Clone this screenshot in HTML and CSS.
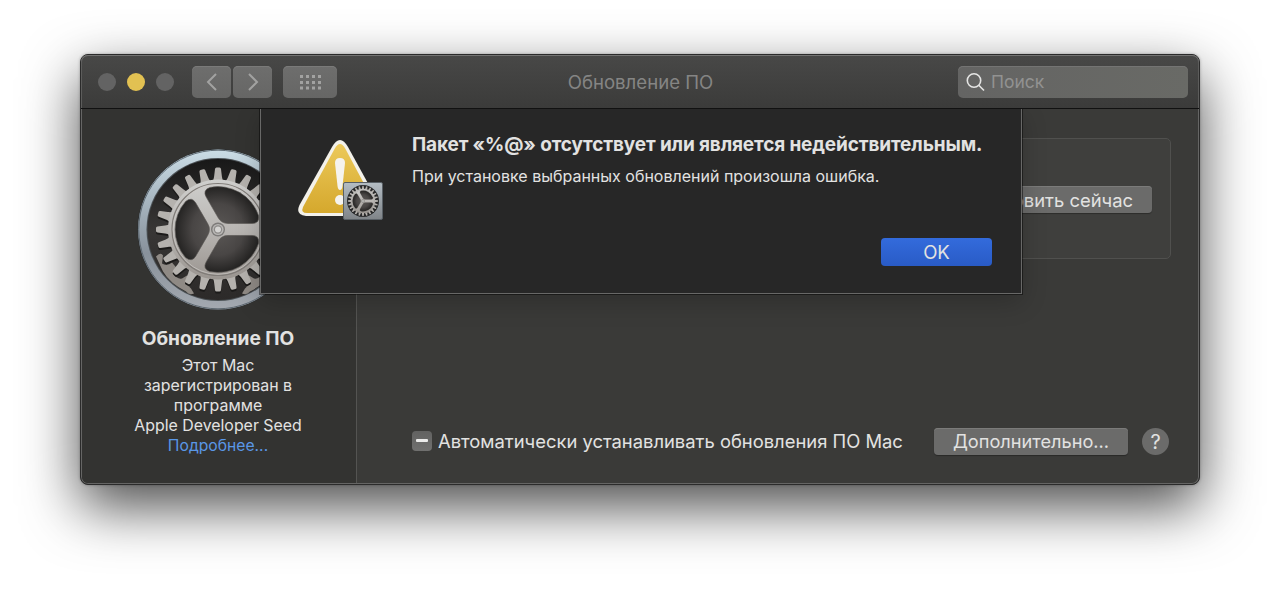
FILE: index.html
```html
<!DOCTYPE html>
<html lang="ru">
<head>
    <meta charset="UTF-8">
    <meta name="viewport" content="width=device-width, initial-scale=1.0">
    <title>Обновление ПО</title>
    <link rel="stylesheet" href="styles.css">
</head>
<body>
    <svg width="0" height="0" class="defs">
        <defs>
            <linearGradient id="metal" x1="0" y1="0" x2="0" y2="1">
                <stop offset="0" stop-color="#cfcfcd"/>
                <stop offset="0.5" stop-color="#b9b6b3"/>
                <stop offset="1" stop-color="#9a9590"/>
            </linearGradient>
            <linearGradient id="rim" x1="0" y1="0" x2="0" y2="1">
                <stop offset="0" stop-color="#cbdde6"/>
                <stop offset="0.3" stop-color="#a9b8c2"/>
                <stop offset="0.65" stop-color="#88919b"/>
                <stop offset="1" stop-color="#a4a9b0"/>
            </linearGradient>
            <linearGradient id="inside" x1="0" y1="0" x2="0" y2="1">
                <stop offset="0" stop-color="#181818"/>
                <stop offset="0.5" stop-color="#383635"/>
                <stop offset="1" stop-color="#2c2a29"/>
            </linearGradient>
            <radialGradient id="depth" gradientUnits="userSpaceOnUse" cx="0" cy="0" r="43">
                <stop offset="0" stop-color="#5b5856"/>
                <stop offset="0.6" stop-color="#494645"/>
                <stop offset="1" stop-color="#242322"/>
            </radialGradient>
            <linearGradient id="yellow" x1="0" y1="0" x2="0" y2="1">
                <stop offset="0" stop-color="#ecc95a"/>
                <stop offset="1" stop-color="#d5a82d"/>
            </linearGradient>
            <linearGradient id="plate" x1="0" y1="0" x2="0" y2="1">
                <stop offset="0" stop-color="#b4bdc4"/>
                <stop offset="1" stop-color="#7f8488"/>
            </linearGradient>
            <path id="tooth" d="M-5.500 -48 C-4.500 -50 -4.200 -51 -3.900 -53 L-3 -60.500 Q-2.800 -62 -1.500 -62 H1.500 Q2.800 -62 3 -60.500 L3.900 -53 C4.200 -51 4.500 -50 5.500 -48 Z"/>
            <g id="teeth">
                <use href="#tooth"/>
                <use href="#tooth" transform="rotate(15)"/>
                <use href="#tooth" transform="rotate(30)"/>
                <use href="#tooth" transform="rotate(45)"/>
                <use href="#tooth" transform="rotate(60)"/>
                <use href="#tooth" transform="rotate(75)"/>
            </g>
            <g id="all-teeth">
                <use href="#teeth"/>
                <use href="#teeth" transform="rotate(90)"/>
                <use href="#teeth" transform="rotate(180)"/>
                <use href="#teeth" transform="rotate(270)"/>
            </g>
            <!-- hole between two spokes -->
            <path id="hole" d="M10 -6 H34 Q41.800 -6 40.500 -14 A42.800 42.800 0 0 0 -8.100 -42.100 Q-15.700 -39.200 -11.800 -32.400 L0.200 -11.660 Q3.500 -6 10 -6 Z"/>
            <g id="gear">
                <g fill="#1b1a19">
                    <use href="#all-teeth" transform="translate(0 2)"/>
                </g>
                <g fill="#b5b2ae">
                    <use href="#all-teeth"/>
                </g>
                <circle r="50" fill="url(#metal)"/>
                <circle r="46" fill="none" stroke="#807c78" stroke-width="1.200"/>
                <circle r="44.800" fill="none" stroke="#cbc9c6" stroke-width="0.700"/>
                <g fill="url(#depth)" stroke="#5a5754" stroke-width="0.600">
                    <use href="#hole"/>
                    <use href="#hole" transform="rotate(120)"/>
                    <use href="#hole" transform="rotate(240)"/>
                </g>
                <circle r="7" fill="#7d7b79"/>
                <circle r="5.600" fill="#b9b7b5"/>
                <circle r="4.200" fill="#8d8b89"/>
                <circle r="3" fill="#d5d4d2"/>
            </g>
        </defs>
    </svg>

    <div class="window">
        <header class="toolbar">
            <span class="light"></span>
            <span class="light light-yellow"></span>
            <span class="light"></span>
            <div class="nav">
                <button class="tool-btn">
                    <svg width="12" height="20" viewBox="0 0 12 20"><path d="M10 2 L2 10 L10 18"/></svg>
                </button>
                <button class="tool-btn">
                    <svg width="12" height="20" viewBox="0 0 12 20"><path d="M2 2 L10 10 L2 18"/></svg>
                </button>
            </div>
            <button class="tool-btn grid-btn">
                <svg width="22" height="16" viewBox="0 0 22 16">
                    <path class="dots" d="M1 2.500 H22 M1 8.500 H22 M1 14 H22"/>
                </svg>
            </button>
            <h1 class="window-title">Обновление ПО</h1>
            <div class="search">
                <svg width="20" height="20" viewBox="0 0 20 20"><circle cx="8" cy="8.500" r="6.700"/><path d="M12.800 13.300 L18 18.500"/></svg>
                <span>Поиск</span>
            </div>
        </header>

        <div class="content">
            <aside class="sidebar">
                <svg class="gear-icon" width="168" height="168" viewBox="-84 -84.500 168 168">
                    <circle r="80.500" fill="#292d30"/>
                    <circle r="80" fill="url(#rim)"/>
                    <circle r="79.300" fill="none" stroke="#56616a" stroke-width="0.900"/>
                    <circle r="71.500" fill="#4b5155"/>
                    <circle r="70.500" fill="url(#inside)"/>
                    <!-- neighbouring cogs at the lower edge -->
                    <g fill="#8f8a85">
                        <path id="cog" d="M-62 27 Q-57 22 -55 26 L-56 34 Q-51 37 -46 33 L-41 39 L-45 44 Q-41 50 -36 49 L-31 46 L-27 53 Q-31 56 -27 59 L-24 64 Q-29 66 -32 62 Q-48 54 -55 42 Z"/>
                        <use href="#cog" transform="scale(-1 1)"/>
                    </g>
                    <use href="#gear"/>
                </svg>
                <h2>Обновление ПО</h2>
                <p class="note">Этот Mac<br>зарегистрирован в<br>программе<br>Apple Developer Seed</p>
                <a class="more">Подробнее...</a>
            </aside>

            <main class="main">
                <div class="update-box">
                    <button class="btn update-btn">Обновить сейчас</button>
                </div>
                <div class="bottom-row">
                    <span class="checkbox"></span>
                    <span class="auto-label">Автоматически устанавливать обновления ПО Mac</span>
                    <button class="btn details-btn">Дополнительно...</button>
                    <button class="help">?</button>
                </div>
            </main>
        </div>

        <div class="sheet">
            <svg class="alert-icon" width="90" height="86" viewBox="0 0 90 86">
                <path d="M36 9 Q44 -5 52 9 L85 69 Q87 78 78 78 H10 Q-1 77 3.500 67 Z" fill="#f3f1ea"/>
                <path d="M38.500 11 Q44 1 49.500 11 L81 70 Q82 75 77 75 H11 Q4.500 75 7 69 Z" fill="url(#yellow)"/>
                <path d="M39 25 Q39 20 44 20 Q49 20 49 25 L46.500 48 Q46 52 44 52 Q42 52 41.500 48 Z" fill="#f5f3ee"/>
                <circle cx="44" cy="62" r="5" fill="#f5f3ee"/>
                <rect x="47.500" y="44.500" width="39" height="37" rx="1.500" fill="url(#plate)" stroke="#596066" stroke-width="1"/>
                <circle cx="67" cy="63" r="16" fill="#292a2b"/>
                <use href="#gear" transform="translate(67 63) scale(0.245)"/>
            </svg>
            <div class="sheet-body">
                <h3>Пакет «%@» отсутствует или является недействительным.</h3>
                <p>При установке выбранных обновлений произошла ошибка.</p>
                <button class="ok">OK</button>
            </div>
        </div>
    </div>
</body>
</html>
```
FILE: styles.css
```css
* {
    box-sizing: border-box;
}
body {
    margin: 0;
    height: 590px;
    padding: 54px 80px;
    background-color: #fff;
    font-family: Inter, "Liberation Sans", sans-serif;
    color: #e2e2e1;
    overflow: hidden;
}
h1, h2, h3, p {
    margin: 0;
}
button {
    font-family: inherit;
    border: none;
    padding: 0;
    color: inherit;
}
.defs {
    position: absolute;
}
.window {
    position: relative;
    display: flex;
    flex-direction: column;
    width: 1120px;
    height: 431px;
    border: 1px solid #2b2b2b;
    border-radius: 8px;
    background-color: #3a3a38;
    box-shadow: inset 0 0 0 1px #656564, 0 0 3px rgba(0, 0, 0, 0.3), 0 22px 56px rgba(0, 0, 0, 0.7);
}
.toolbar {
    display: flex;
    align-items: center;
    height: 54px;
    padding: 0 11px 0 17px;
    border-bottom: 1px solid #111;
    border-radius: 7px 7px 0 0;
    background: linear-gradient(#484847, #3b3b3a);
    box-shadow: inset 0 1px #737372, inset 1px 0 #5c5c5b, inset -1px 0 #5c5c5b;
}
.light {
    width: 18px;
    height: 18px;
    margin-right: 11px;
    border-radius: 50%;
    background-color: #636363;
}
.light-yellow {
    background-color: #e2c152;
}
.nav {
    display: flex;
    gap: 2px;
    margin: 0 11px 0 7px;
}
.tool-btn {
    display: flex;
    align-items: center;
    justify-content: center;
    width: 39px;
    height: 32px;
    border-radius: 5px;
    background: linear-gradient(#6e6e6d, #666665);
    box-shadow: inset 0 1px #7a7a79;
}
.tool-btn path {
    fill: none;
    stroke: #a2a2a1;
    stroke-width: 2;
}
.grid-btn {
    width: 54px;
}
.tool-btn .dots {
    stroke-width: 3;
    stroke-dasharray: 3 3;
}
.window-title {
    flex: 1;
    padding: 1px 14px 0 0;
    text-align: center;
    font-size: 18.6px;
    font-weight: 400;
    color: #858584;
}
.search {
    display: flex;
    align-items: center;
    gap: 5px;
    width: 230px;
    height: 32px;
    padding-left: 8px;
    border-radius: 5px;
    background: linear-gradient(90deg, #646463, #696a66);
    box-shadow: inset 0 1px #747473;
    font-size: 17.5px;
    color: #929291;
}
.search svg {
    fill: none;
    stroke: #e5e5e4;
    stroke-width: 1.6;
}
.content {
    display: flex;
    flex: 1;
    padding: 0 1px 1px;
}
.sidebar {
    display: flex;
    flex-direction: column;
    align-items: center;
    width: 275px;
    padding: 36px 2px 0 0;
    border-right: 1px solid #545452;
    border-radius: 0 0 0 6px;
    background-color: #333331;
}
.sidebar h2 {
    margin-top: 13px;
    font-size: 19.1px;
    line-height: 24px;
    font-weight: 700;
}
.note {
    margin-top: 6px;
    text-align: center;
    font-size: 15.9px;
    line-height: 20px;
}
.more {
    font-size: 15.7px;
    line-height: 20px;
    color: #5a97e6;
}
.main {
    display: flex;
    flex: 1;
    flex-direction: column;
    justify-content: space-between;
    padding: 29px 28px 28px 55px;
}
.update-box {
    display: flex;
    align-items: center;
    justify-content: flex-end;
    height: 121px;
    margin-right: -1px;
    padding: 2px 18px 0 0;
    border: 1px solid #50504e;
    border-radius: 5px;
    background-color: #3f3f3d;
}
.btn {
    height: 27px;
    border-radius: 4px;
    background-color: #6b6b6a;
    box-shadow: inset 0 1px #7b7b7a, 0 1px 1px rgba(0, 0, 0, 0.3);
    font-size: 18.4px;
}
.update-btn {
    width: 194px;
}
.bottom-row {
    display: flex;
    align-items: center;
}
.checkbox {
    display: flex;
    align-items: center;
    justify-content: center;
    width: 20px;
    height: 20px;
    margin-bottom: 2px;
    border-radius: 4px;
    background: linear-gradient(#626261, #70706f);
}
.checkbox::before {
    content: "";
    width: 12px;
    height: 3px;
    border-radius: 1px;
    background-color: #ececeb;
}
.auto-label {
    flex: 1;
    margin: 0 0 2px 6px;
    font-size: 18.4px;
    white-space: nowrap;
}
.details-btn {
    width: 194px;
    padding-bottom: 1px;
    font-size: 18.2px;
}
.help {
    width: 27px;
    height: 27px;
    margin: 0 1px 0 14px;
    border-radius: 50%;
    background-color: #6b6b6a;
    font-size: 20px;
}
/* modal sheet over the window content */
.sheet {
    position: absolute;
    top: 54px;
    left: 179px;
    display: flex;
    width: 762px;
    height: 185px;
    padding: 26px 29px 27px 35px;
    border: 1px solid #686867;
    border-top: none;
    background-color: #272727;
    box-shadow: 0 0 0 1px rgba(0, 0, 0, 0.45), 0 8px 24px rgba(0, 0, 0, 0.2);
    clip-path: inset(0 -40px -40px -40px);
}
.alert-icon {
    flex: none;
    margin-top: 3px;
}
.sheet-body {
    display: flex;
    flex: 1;
    flex-direction: column;
    margin-left: 26px;
}
.sheet-body h3 {
    font-size: 19px;
    line-height: 20px;
    font-weight: 700;
    letter-spacing: -0.13px;
    white-space: nowrap;
}
.sheet-body p {
    margin-top: 11px;
    font-size: 16px;
    line-height: 20px;
    white-space: nowrap;
}
.ok {
    align-self: flex-end;
    width: 111px;
    height: 28px;
    margin-top: auto;
    border-radius: 4px;
    background: linear-gradient(#336bdc, #295bc6);
    font-size: 18.6px;
}
```
